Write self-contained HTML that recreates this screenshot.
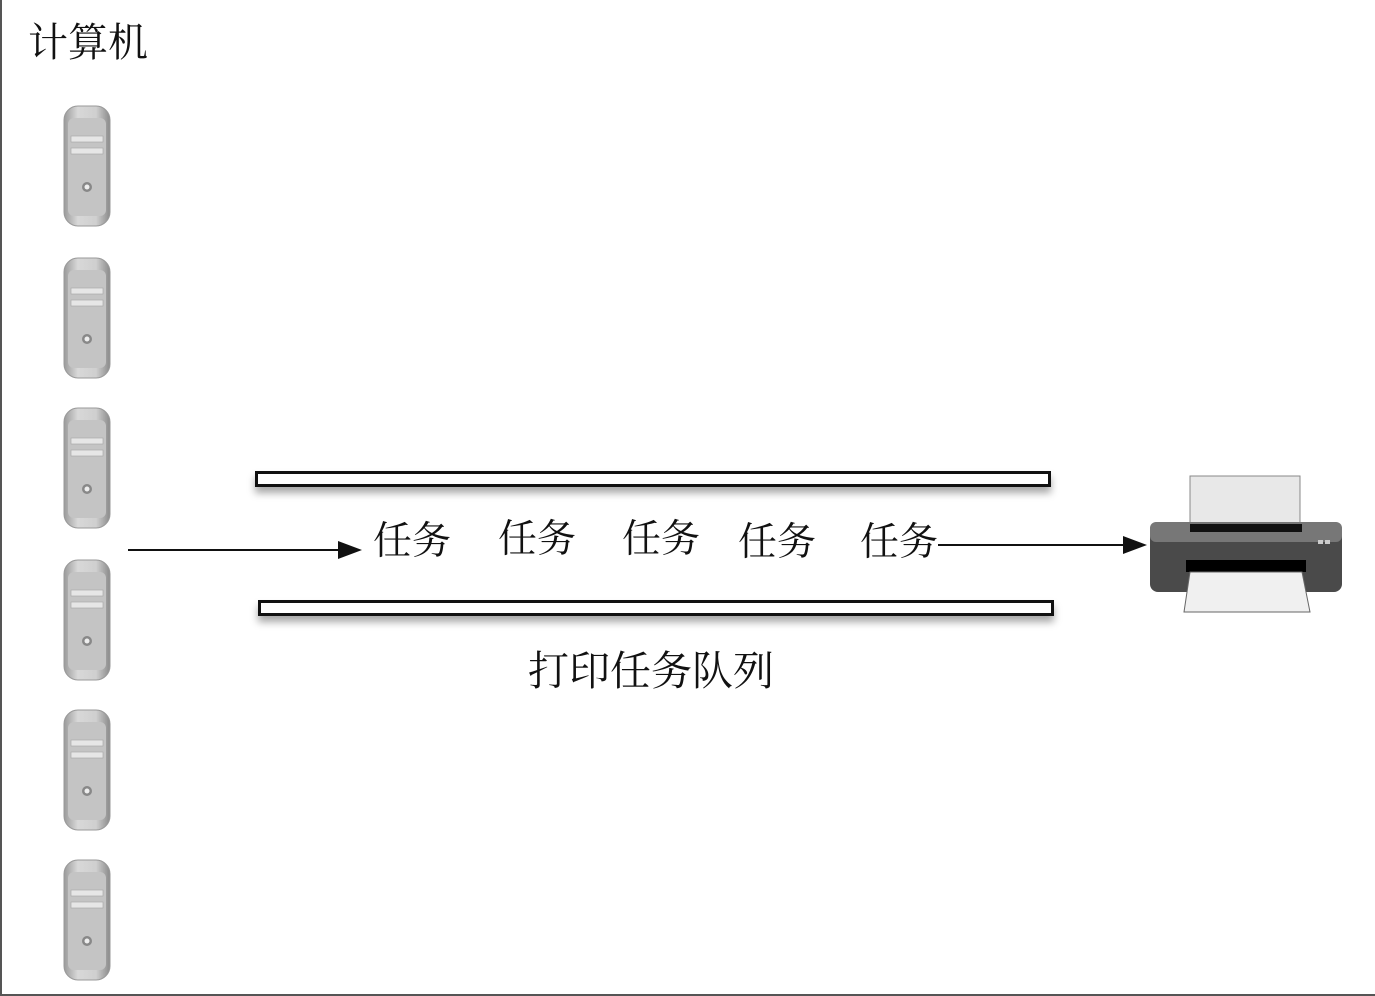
<!DOCTYPE html><html><head><meta charset="utf-8"><style>
body{margin:0;width:1375px;height:996px;background:#fff;position:relative;overflow:hidden;font-family:"Liberation Serif","Noto Serif CJK SC",serif}
.frame{position:absolute;left:0;top:0;width:1373px;height:994px;border-left:2px solid #555;border-bottom:2px solid #555;border-right:1px solid #999}
.t{position:absolute;color:#111;white-space:nowrap;line-height:1}
.bar{position:absolute;height:10px;border:3px solid #111;background:#fff;box-shadow:0 6px 8px rgba(0,0,0,.35)}
.pc{position:absolute;left:62px;width:50px;height:124px}
</style></head><body>
<div class="frame"></div>
<div class="t" style="left:28px;top:23px;font-size:40px">计算机</div>
<svg width="0" height="0" style="position:absolute"><defs>
<linearGradient id="g" x1="0" x2="1"><stop offset="0" stop-color="#9a9a9a"/><stop offset=".3" stop-color="#d8d8d8"/><stop offset=".7" stop-color="#cfcfcf"/><stop offset="1" stop-color="#8a8a8a"/></linearGradient>
<symbol id="pc" viewBox="0 0 50 124">
<rect x="2" y="2" width="46" height="120" rx="14" fill="url(#g)" stroke="#999"/>
<rect x="6" y="14" width="38" height="98" rx="6" fill="#c4c4c4"/>
<rect x="9" y="32" width="32" height="6" fill="#e6e6e6" stroke="#aaa" stroke-width=".7"/>
<rect x="9" y="44" width="32" height="6" fill="#e6e6e6" stroke="#aaa" stroke-width=".7"/>
<circle cx="25" cy="83" r="5" fill="#888"/><circle cx="25" cy="83" r="2.5" fill="#eee"/>
</symbol></defs></svg>
<svg class="pc" style="top:104px"><use href="#pc"/></svg>
<svg class="pc" style="top:256px"><use href="#pc"/></svg>
<svg class="pc" style="top:406px"><use href="#pc"/></svg>
<svg class="pc" style="top:558px"><use href="#pc"/></svg>
<svg class="pc" style="top:708px"><use href="#pc"/></svg>
<svg class="pc" style="top:858px"><use href="#pc"/></svg>
<div class="bar" style="left:255px;top:471px;width:790px"></div>
<div class="bar" style="left:258px;top:600px;width:790px"></div>
<svg style="position:absolute;left:0;top:0" width="1375" height="996">
<line x1="128" y1="550" x2="340" y2="550" stroke="#111" stroke-width="2"/>
<polygon points="338,541 362,550 338,559" fill="#111"/>
<line x1="938" y1="545" x2="1125" y2="545" stroke="#111" stroke-width="2"/>
<polygon points="1123,536 1147,545 1123,554" fill="#111"/>
<rect x="1190" y="476" width="110" height="50" fill="#e8e8e8" stroke="#888"/>
<rect x="1150" y="522" width="192" height="70" rx="8" fill="#4a4a4a"/>
<rect x="1150" y="522" width="192" height="20" rx="6" fill="#777"/>
<rect x="1190" y="524" width="112" height="8" fill="#111"/>
<rect x="1186" y="560" width="120" height="12" fill="#000"/>
<polygon points="1190,572 1302,572 1310,612 1184,612" fill="#f0f0f0" stroke="#666"/>
<rect x="1318" y="540" width="5" height="4" fill="#ccc"/><rect x="1325" y="540" width="5" height="4" fill="#ccc"/>
</svg>
<div class="t" style="left:373px;top:522px;font-size:39px">任务</div>
<div class="t" style="left:498px;top:520px;font-size:39px">任务</div>
<div class="t" style="left:622px;top:520px;font-size:39px">任务</div>
<div class="t" style="left:738px;top:523px;font-size:39px">任务</div>
<div class="t" style="left:860px;top:523px;font-size:39px">任务</div>
<div class="t" style="left:528px;top:651px;font-size:41px">打印任务队列</div>
</body></html>
